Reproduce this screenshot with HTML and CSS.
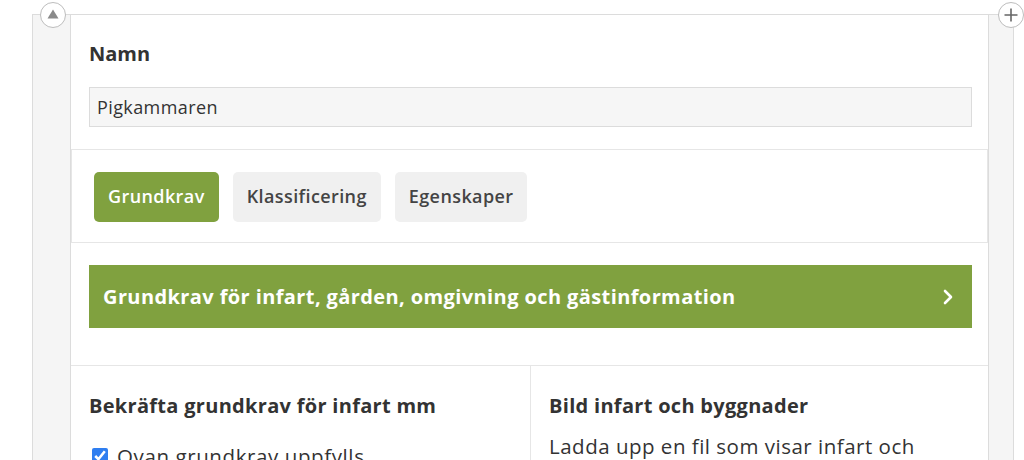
FILE: index.html
```html
<!DOCTYPE html>
<html lang="sv">
<head>
<meta charset="utf-8">
<link rel="stylesheet" href="styles.css">
</head>
<body>
<div class="outer">
  <span class="circle-btn up" aria-label="Flytta upp">
    <svg width="14" height="12" viewBox="0 0 14 12"><path d="M7 1.5 L12.5 10.5 L1.5 10.5 Z" fill="#8a8a8a"/></svg>
  </span>
  <span class="circle-btn plus" aria-label="Lägg till">
    <svg width="16" height="16" viewBox="0 0 16 16"><path d="M8 1.5 V14.5 M1.5 8 H14.5" stroke="#666" stroke-width="1.6" fill="none"/></svg>
  </span>
  <div class="card">
    <div class="name-section">
      <div class="label">Namn</div>
      <div class="input">Pigkammaren</div>
    </div>
    <div class="tabs">
      <span class="tab active">Grundkrav</span>
      <span class="tab">Klassificering</span>
      <span class="tab">Egenskaper</span>
    </div>
    <div class="banner-wrap">
      <div class="banner">
        <span>Grundkrav för infart, gården, omgivning och gästinformation</span>
        <svg width="12" height="16" viewBox="0 0 12 16"><path d="M3 2 L9 8 L3 14" stroke="#fff" stroke-width="2.6" fill="none" stroke-linecap="round" stroke-linejoin="round"/></svg>
      </div>
    </div>
    <div class="columns">
      <div class="col left">
        <div class="heading">Bekräfta grundkrav för infart mm</div>
        <label class="check"><input type="checkbox" checked><span>Ovan grundkrav uppfylls</span></label>
      </div>
      <div class="col right">
        <div class="heading">Bild infart och byggnader</div>
        <p class="text">Ladda upp en fil som visar infart och byggnader.</p>
      </div>
    </div>
  </div>
</div>
</body>
</html>
```
FILE: styles.css
```css
html, body {
  margin: 0;
  padding: 0;
  background: #fff;
  overflow: hidden;
  height: 460px;
}
body {
  font-family: "Open Sans", Lato, Arial, sans-serif;
  color: #333;
}
.outer {
  position: relative;
  margin: 14px 0 0 32px;
  width: 919px;
  height: 600px;
  padding: 0 24px 0 37px;
  background: #f5f5f5;
  border: 1px solid #dcdcdc;
  border-bottom: none;
}
.circle-btn {
  position: absolute;
  top: -13px;
  width: 24px;
  height: 24px;
  border-radius: 50%;
  border: 1.5px solid #bdbdbd;
  background: #fff;
  display: flex;
  align-items: center;
  justify-content: center;
}
.circle-btn.up { left: 7px; }
.circle-btn.plus { right: -11px; }
.circle-btn.up svg { margin-top: -2px; }
.card {
  background: #fff;
  border-left: 1px solid #dcdcdc;
  border-right: 1px solid #dcdcdc;
  height: 100%;
}
.name-section {
  padding: 26px 16px 22px 18px;
}
.label {
  font-size: 20px;
  font-weight: 700;
  line-height: 26px;
}
.input {
  margin-top: 20px;
  height: 38px;
  border: 1px solid #dcdcdc;
  background: #f6f6f6;
  font-size: 18px;
  letter-spacing: 0.4px;
  line-height: 38px;
  padding: 0 7px;
  color: #333;
}
.tabs {
  display: flex;
  gap: 14px;
  padding: 22px 22px 20px;
  border: 1px solid #e6e6e6;
}
.tab {
  height: 50px;
  padding: 0 14px 2px 14px;
  border-radius: 5px;
  background: #f0f0f0;
  color: #444;
  font-size: 18px;
  font-weight: 600;
  letter-spacing: 0.4px;
  display: flex;
  align-items: center;
  box-sizing: border-box;
}
.tab.active {
  background: #80a13f;
  color: #fff;
}
.banner-wrap {
  padding: 22px 16px 37px 18px;
  border-bottom: 1px solid #e6e6e6;
}
.banner {
  height: 63px;
  background: #80a13f;
  color: #fff;
  display: flex;
  align-items: center;
  justify-content: space-between;
  padding: 0 18px 0 14px;
  font-size: 20px;
  font-weight: 700;
  letter-spacing: 0.4px;
}
.columns {
  display: grid;
  grid-template-columns: 460px 1fr;
}
.col {
  padding: 27px 18px 0;
}
.col.left {
  border-right: 1px solid #e6e6e6;
}
.heading {
  font-size: 20px;
  font-weight: 700;
  line-height: 26px;
  letter-spacing: 0.3px;
}
.check {
  display: flex;
  align-items: center;
  gap: 9px;
  margin-top: 23px;
  font-size: 20.5px;
  letter-spacing: 0.6px;
  margin-left: 3px;
}
.check input {
  width: 16px;
  height: 16px;
  margin: 0;
  accent-color: #2f7ef0;
}
.text {
  margin: 12px 0 0;
  font-size: 20.5px;
  letter-spacing: 0.5px;
  line-height: 30px;
  width: 400px;
}
```
